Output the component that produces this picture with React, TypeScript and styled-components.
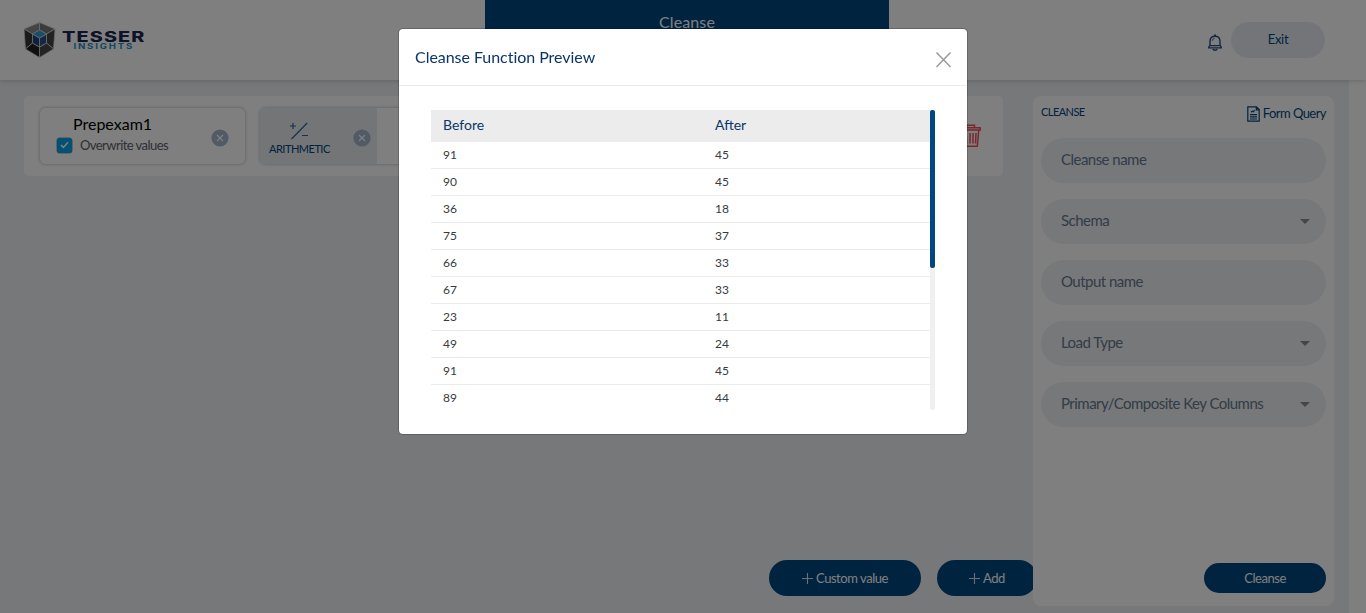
import React from "react";
import styled, { createGlobalStyle } from "styled-components";

const navy = "#00467f";

const GlobalStyle = createGlobalStyle`
  * { box-sizing: border-box; }
  body { margin: 0; overflow: hidden; background: #fff; font-family: Lato, "Liberation Sans", sans-serif; }
  button { font-family: inherit; border: 0; padding: 0; cursor: pointer; }
`;

const Page = styled.div`
  height: 613px;
  display: flex;
  flex-direction: column;
  overflow: hidden;
`;

const Header = styled.header`
  height: 80px;
  flex: none;
  display: grid;
  grid-template-columns: 461px 404px 1fr;
  padding: 0 41px 0 24px;
  background: #fff;
  box-shadow: 0 1px 5px rgba(0, 0, 0, 0.18);
  z-index: 1;
`;

const Brand = styled.div`
  display: flex;
  align-items: center;
`;

const PageTitle = styled.h1`
  margin: 0;
  height: 46px;
  background: ${navy};
  color: #fff;
  font-size: 16px;
  font-weight: 400;
  line-height: 44px;
  letter-spacing: 0.1px;
  text-align: center;
`;

const HeaderActions = styled.div`
  display: flex;
  align-items: center;
  justify-content: flex-end;
  gap: 8px;
  svg { margin-top: 5px; }
`;

const ExitButton = styled.button`
  width: 94px;
  height: 36px;
  border-radius: 18px;
  background: #e8ebf3;
  color: ${navy};
  font-size: 13px;
  line-height: 32px;
  letter-spacing: -0.3px;
  padding-bottom: 2px;
`;

const Body = styled.div`
  flex: 1;
  display: flex;
  width: 1349px;
  padding: 16px 15px 7px 24px;
  gap: 30px;
  background: #eef0f4;
`;

const Workspace = styled.main`
  width: 979px;
  flex: none;
  display: flex;
  flex-direction: column;
  justify-content: space-between;
  padding-bottom: 10px;
`;

const Pipeline = styled.section`
  height: 80px;
  display: flex;
  align-items: center;
  gap: 15px;
  padding: 0 22px 0 16px;
  background: #fff;
  border-radius: 5px;
`;

const Card = styled.div<{ $width: number }>`
  width: ${(p) => p.$width}px;
  height: 56px;
  display: flex;
  border-radius: 6px;
  background: #fff;
  overflow: hidden;
  box-shadow: 0 0 3px 1px #ccd3df;
`;

const SourceInfo = styled.div`
  flex: 1;
  padding: 7px 0 0 17px;
`;

const SourceName = styled.div`
  padding-left: 16px;
  font-size: 16px;
  line-height: 18px;
  letter-spacing: 0;
  color: #000;
`;

const Overwrite = styled.label`
  display: flex;
  align-items: center;
  gap: 8px;
  margin-top: 4px;
  font-size: 13px;
  line-height: 16px;
  letter-spacing: -0.55px;
  white-space: nowrap;
  color: #5b6068;
`;

const Check = styled.span`
  width: 15px;
  height: 15px;
  display: flex;
  align-items: center;
  justify-content: center;
  border-radius: 3px;
  background: #00a2e8;
  box-shadow: 0 0 0 0.5px #8d8d8d;
`;

const RemoveSlot = styled.div<{ $right: number }>`
  display: flex;
  align-items: center;
  padding: 3px ${(p) => p.$right}px 0 0;
`;

const FunctionTile = styled.div`
  width: 117px;
  display: flex;
  justify-content: space-between;
  background: #e6eaef;
`;

const FunctionName = styled.div`
  display: flex;
  flex-direction: column;
  align-items: center;
  padding: 14px 0 0 9px;
  gap: 2px;
  font-size: 11px;
  line-height: 13px;
  letter-spacing: -0.5px;
  color: ${navy};
`;

const TrashSlot = styled.div`
  margin-left: auto;
  display: flex;
`;

const Actions = styled.div`
  display: flex;
  justify-content: flex-end;
  gap: 16px;
  margin-right: -34px;
`;

const PrimaryButton = styled.button<{ $width: number; $height?: number }>`
  width: ${(p) => p.$width}px;
  height: ${(p) => p.$height ?? 36}px;
  display: flex;
  align-items: center;
  justify-content: center;
  gap: 3px;
  border-radius: 18px;
  background: ${navy};
  color: #fff;
  font-size: 13px;
  letter-spacing: -0.45px;
`;

const SidePanel = styled.aside`
  flex: 1;
  display: flex;
  flex-direction: column;
  padding: 8px 8px 13px;
  border-radius: 8px;
  background: #fff;
  z-index: 1;
`;

const PanelHead = styled.div`
  height: 34px;
  display: flex;
  justify-content: space-between;
  align-items: flex-start;
  color: ${navy};
`;

const PanelTitle = styled.span`
  font-size: 11px;
  line-height: 15px;
  letter-spacing: -0.55px;
`;

const FormQuery = styled.span`
  display: flex;
  align-items: center;
  gap: 3px;
  padding-top: 2px;
  font-size: 13px;
  line-height: 14px;
  letter-spacing: -0.55px;
`;

const QueryText = styled.span`
  padding-bottom: 2px;
`;

const Fields = styled.div`
  display: flex;
  flex-direction: column;
  gap: 16px;
`;

const Field = styled.div`
  height: 45px;
  display: flex;
  align-items: center;
  justify-content: space-between;
  padding: 0 16px 3px 20px;
  border-radius: 23px;
  background: #eef0f4;
  color: #667990;
  font-size: 15px;
  letter-spacing: -0.53px;
`;

const Caret = styled.i`
  margin-top: 2px;
  border: 5px solid transparent;
  border-top-color: #8d8d8d;
  border-bottom: 0;
`;

const PanelFoot = styled.div`
  margin-top: auto;
  display: flex;
  justify-content: flex-end;
`;

const Backdrop = styled.div`
  position: fixed;
  inset: 0;
  z-index: 10;
  display: flex;
  justify-content: center;
  align-items: flex-start;
  padding-top: 28px;
  background: rgba(0, 0, 0, 0.5);
`;

const Dialog = styled.div`
  width: 570px;
  height: 407px;
  border: 1px solid rgba(0, 0, 0, 0.2);
  border-radius: 5px;
  background: #fff;
  background-clip: padding-box;
`;

const DialogHead = styled.div`
  height: 57px;
  display: flex;
  align-items: center;
  justify-content: space-between;
  padding: 0 15px 0 16px;
  border-bottom: 1px solid #ececec;
`;

const DialogTitle = styled.h2`
  margin: 0;
  padding-bottom: 2px;
  font-size: 16px;
  font-weight: 400;
  letter-spacing: -0.04px;
  color: #0b3568;
`;

const Close = styled.button`
  display: flex;
  margin-top: 5px;
  background: none;
`;

const TableArea = styled.div`
  height: 300px;
  display: flex;
  margin: 24px 32px 0;
`;

const TableClip = styled.div`
  flex: 1;
  overflow: hidden;
`;

const Row = styled.div<{ $head?: boolean }>`
  height: ${(p) => (p.$head ? 32 : 27)}px;
  display: grid;
  grid-template-columns: 272px 1fr;
  align-items: center;
  padding: 0 0 ${(p) => (p.$head ? 3 : 2)}px 12px;
  background: ${(p) => (p.$head ? "#ececec" : "#fff")};
  color: ${(p) => (p.$head ? "#0b3568" : "#373b40")};
  border-bottom: ${(p) => (p.$head ? "0" : "1px solid #ececec")};
  font-size: ${(p) => (p.$head ? "14px" : "12px")};
  letter-spacing: 0;
`;

const ScrollTrack = styled.div`
  width: 5px;
  border-radius: 3px;
  background: #f0f0f0;
`;

const ScrollThumb = styled.div`
  height: 158px;
  border-radius: 2px;
  background: #00467f;
`;

const rows = [
  [91, 45], [90, 45], [36, 18], [75, 37], [66, 33],
  [67, 33], [23, 11], [49, 24], [91, 45], [89, 44],
];

const fields = [
  { label: "Cleanse name" },
  { label: "Schema", select: true },
  { label: "Output name" },
  { label: "Load Type", select: true },
  { label: "Primary/Composite Key Columns", select: true },
];

const Logo = () => (
  <svg width="122" height="36" viewBox="0 0 122 36">
    <g stroke="#d5d5d5" strokeWidth="0.8" strokeLinejoin="round">
      <path d="M15.5 .5 31 7 22.5 12 15.5 8z" fill="#777" />
      <path d="M15.5 .5 0 7 8.5 12 15.5 8z" fill="#8a8a8a" />
      <path d="M0 7 8.5 12V21L1.5 27z" fill="#363636" />
      <path d="M31 7 22.5 12V21L29.5 27z" fill="#444" />
      <path d="M1.5 27 8.5 21 15.5 25V35.5z" fill="#202020" />
      <path d="M29.5 27 22.5 21 15.5 25V35.5z" fill="#484848" />
      <path d="M8.5 12 15.5 16V25L8.5 21z" fill="#1e3f78" />
      <path d="M22.5 12 15.5 16V25L22.5 21z" fill="#29508b" />
      <path d="M15.5 8 22.5 12 15.5 16 8.5 12z" fill="#2c9fd0" />
    </g>
    <text x="38" y="19.8" fontFamily="Inter, sans-serif" fontSize="14.2" fontWeight="800" fill="#1b2951" letterSpacing="0.8" textLength="83.5" lengthAdjust="spacingAndGlyphs">TESSER</text>
    <text x="49.5" y="27.4" fontFamily="Inter, sans-serif" fontSize="7.4" fontWeight="700" fill="#1d8fc0" letterSpacing="1.4" textLength="60.5" lengthAdjust="spacingAndGlyphs">INSIGHTS</text>
  </svg>
);

const Bell = () => (
  <svg width="16" height="17" viewBox="0 0 16 17" fill="none" stroke="#2a4f80" strokeWidth="1.4">
    <path d="M1 13.9h14M3 10.8V7.2C3 4 5 2.2 8 2.2s5 1.8 5 5v3.6M1.5 13.5 3 11V9.5M14.5 13.5 13 11V9.5M3 11.6h10M5.8 15c.6 1.6 3.8 1.6 4.4 0M7 1.3h2" />
    <path d="M5.2 6.8C5.4 5.4 6.2 4.6 7.4 4.4" strokeWidth="1" />
  </svg>
);

const Remove = () => (
  <svg width="18" height="18" viewBox="0 0 18 18">
    <circle cx="9" cy="9" r="8.6" fill="#a5b4cb" />
    <path d="m6 6 6 6m0-6-6 6" stroke="#fff" strokeWidth="1.2" />
  </svg>
);

const Arithmetic = () => (
  <svg width="18" height="18" viewBox="0 0 18 18" fill="none" stroke="#31649b" strokeWidth="1.2">
    <path d="M1.5 17 17.2 1M0 4h6M3 1v6M12 13.5h6" />
  </svg>
);

const Trash = () => (
  <svg width="22" height="24" viewBox="0 0 22 24" fill="none" stroke="#f05058" strokeWidth="1.5">
    <path d="M1 3.7h20.2v2.4H1zM7.5 3.5V1.2h8v2.3M2.8 6.5l1.4 15.7h14.1L19.7 6.5M7.2 9l.5 10.5M11 9v10.5M14 9v10.5M17 9l-.5 10.5" />
  </svg>
);

const Doc = () => (
  <svg width="13" height="16" viewBox="0 0 13 16" fill="none" stroke={navy} strokeWidth="1.2">
    <path d="M.8.8h8.7l2.7 2.7v11.7H.8zM9.3 1v2.8H12M3 8.6h7M3 10.8h7M3 13h7M4 6.2l1.2-1 1 .5 1.6-1.6" />
  </svg>
);

const Plus = () => (
  <svg width="11" height="11" viewBox="0 0 11 11" stroke="#d8e0ea" strokeWidth="1.1">
    <path d="M5.5 0v11M0 5.5h11" />
  </svg>
);

export default function App() {
  return (
    <>
      <GlobalStyle />
      <Page>
        <Header>
          <Brand><Logo /></Brand>
          <PageTitle>Cleanse</PageTitle>
          <HeaderActions>
            <Bell />
            <ExitButton>Exit</ExitButton>
          </HeaderActions>
        </Header>
        <Body>
          <Workspace>
            <Pipeline>
              <Card $width={205}>
                <SourceInfo>
                  <SourceName>Prepexam1</SourceName>
                  <Overwrite>
                    <Check>
                      <svg width="9" height="8" viewBox="0 0 9 8" fill="none" stroke="#fff" strokeWidth="1.5"><path d="m1 4 2.4 2.4L8 1.2" /></svg>
                    </Check>
                    Overwrite values
                  </Overwrite>
                </SourceInfo>
                <RemoveSlot $right={16}><Remove /></RemoveSlot>
              </Card>
              <Card $width={260}>
                <FunctionTile>
                  <FunctionName><Arithmetic />ARITHMETIC</FunctionName>
                  <RemoveSlot $right={6}><Remove /></RemoveSlot>
                </FunctionTile>
              </Card>
              <TrashSlot><Trash /></TrashSlot>
            </Pipeline>
            <Actions>
              <PrimaryButton $width={152}><Plus />Custom value</PrimaryButton>
              <PrimaryButton $width={100}><Plus />Add</PrimaryButton>
            </Actions>
          </Workspace>
          <SidePanel>
            <PanelHead>
              <PanelTitle>CLEANSE</PanelTitle>
              <FormQuery><Doc /><QueryText>Form Query</QueryText></FormQuery>
            </PanelHead>
            <Fields>
              {fields.map((f) => (
                <Field key={f.label}>{f.label}{f.select && <Caret />}</Field>
              ))}
            </Fields>
            <PanelFoot>
              <PrimaryButton $width={122} $height={30}>Cleanse</PrimaryButton>
            </PanelFoot>
          </SidePanel>
        </Body>
      </Page>
      <Backdrop>
        <Dialog role="dialog">
          <DialogHead>
            <DialogTitle>Cleanse Function Preview</DialogTitle>
            <Close aria-label="Close">
              <svg width="17" height="17" viewBox="0 0 17 17" stroke="#999" strokeWidth="1.5"><path d="m1.5 1.5 14 14.5m0-14.5-14 14.5" /></svg>
            </Close>
          </DialogHead>
          <TableArea>
            <TableClip>
              <Row $head><span>Before</span><span>After</span></Row>
              {rows.map(([before, after], i) => (
                <Row key={i}><span>{before}</span><span>{after}</span></Row>
              ))}
            </TableClip>
            <ScrollTrack><ScrollThumb /></ScrollTrack>
          </TableArea>
        </Dialog>
      </Backdrop>
    </>
  );
}
